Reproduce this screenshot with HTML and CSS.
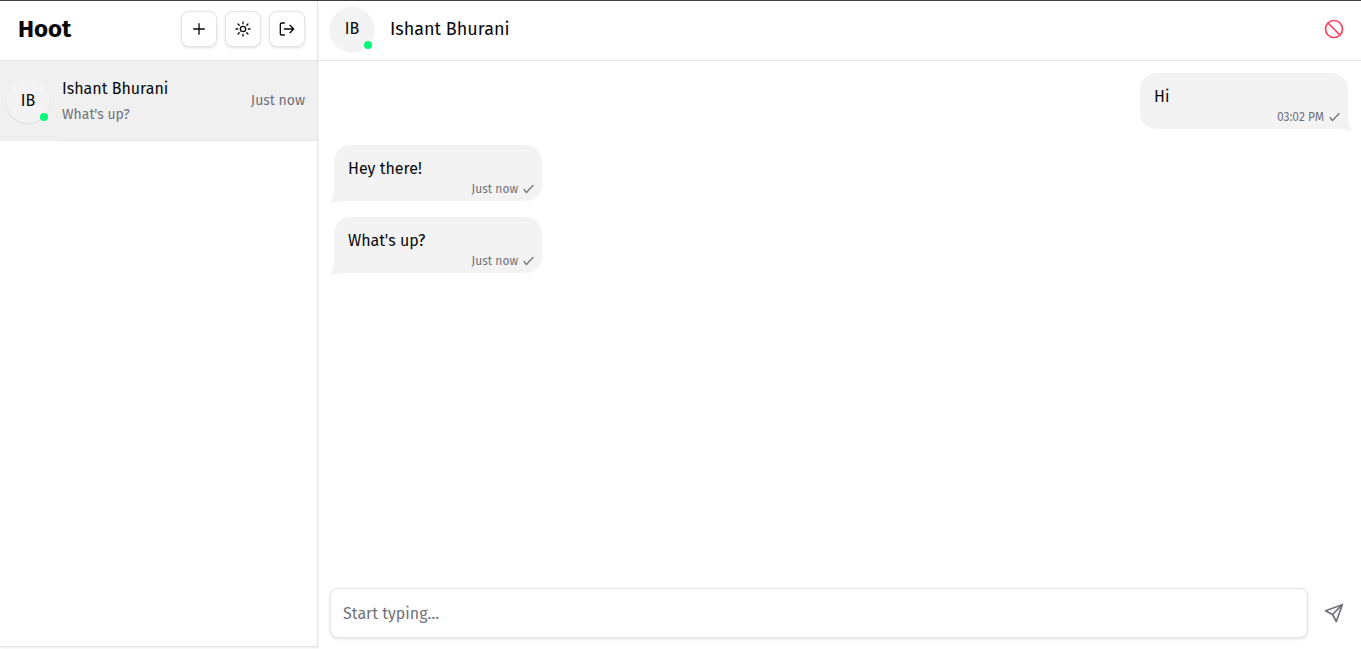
FILE: index.html
```html
<!DOCTYPE html>
<html lang="en">
<head>
<meta charset="utf-8">
<meta name="viewport" content="width=device-width, initial-scale=1">
<title>Hoot</title>
<link rel="stylesheet" href="styles.css">
</head>
<body>
<div class="app">
  <aside class="sidebar">
    <header class="bar sidebar-bar">
      <h1 class="brand">Hoot</h1>
      <div class="actions">
        <button class="icon-button" type="button" aria-label="New chat">
          <svg class="icon" width="16" height="16" viewBox="0 0 24 24"><path d="M4 12h16M12 4v16"/></svg>
        </button>
        <button class="icon-button" type="button" aria-label="Toggle theme">
          <svg class="icon" width="16" height="16" viewBox="0 0 24 24"><circle cx="12" cy="12" r="4"/><path d="M12 1.5v2.500M12 20v2.500M4.600 4.600l1.700 1.700M17.700 17.700l1.700 1.700M1.500 12h2.500M20 12h2.500M6.300 17.700l-1.700 1.700M19.400 4.600l-1.700 1.700"/></svg>
        </button>
        <button class="icon-button" type="button" aria-label="Log out">
          <svg class="icon" width="16" height="16" viewBox="0 0 24 24"><path d="M8 3H4a2 2 0 0 0-2 2v14a2 2 0 0 0 2 2h4M8 12h14M16.500 6.500L22 12l-5.500 5.500"/></svg>
        </button>
      </div>
    </header>
    <nav class="chats" aria-label="Chats">
      <a class="chat" href="#chat">
        <span class="avatar">IB<span class="online"></span></span>
        <span class="chat-body">
          <span class="chat-text">
            <span class="chat-name">Ishant Bhurani</span>
            <span class="chat-last">What's up?</span>
          </span>
          <span class="chat-time">Just now</span>
        </span>
      </a>
    </nav>
  </aside>
  <main class="conversation" id="chat">
    <header class="bar conversation-bar">
      <span class="avatar">IB<span class="online"></span></span>
      <h2 class="peer">Ishant Bhurani</h2>
      <button class="plain-button block" type="button" aria-label="Block user">
        <svg class="icon" width="20" height="20" viewBox="0 0 20 20"><circle cx="10" cy="10" r="8.500"/><path d="M4 4l12 12"/></svg>
      </button>
    </header>
    <section class="messages" aria-label="Messages">
      <article class="message sent">
        <p class="message-text">Hi</p>
        <p class="message-meta"><time>03:02 PM</time><svg class="icon" width="12" height="12" viewBox="0 0 12 12"><path d="M2 6.500l2.500 3 6.500-7"/></svg></p>
        <svg class="tail" width="12" height="12" viewBox="0 0 12 12"><path d="M7 0Q8 7 12 11.500Q6 10 0 9.500z"/></svg>
      </article>
      <article class="message received">
        <p class="message-text">Hey there!</p>
        <p class="message-meta"><time>Just now</time><svg class="icon" width="12" height="12" viewBox="0 0 12 12"><path d="M2 6.500l2.500 3 6.500-7"/></svg></p>
        <svg class="tail" width="12" height="12" viewBox="0 0 12 12"><path d="M5 0Q4 7 0 11.500Q6 10 12 9.500z"/></svg>
      </article>
      <article class="message received">
        <p class="message-text">What's up?</p>
        <p class="message-meta"><time>Just now</time><svg class="icon" width="12" height="12" viewBox="0 0 12 12"><path d="M2 6.500l2.500 3 6.500-7"/></svg></p>
        <svg class="tail" width="12" height="12" viewBox="0 0 12 12"><path d="M5 0Q4 7 0 11.500Q6 10 12 9.500z"/></svg>
      </article>
    </section>
    <form class="composer">
      <input class="composer-input" type="text" placeholder="Start typing..." aria-label="Message">
      <button class="plain-button send" type="submit" aria-label="Send">
        <svg class="icon" width="20" height="20" viewBox="0 0 20 20"><path d="M18.300 1.700L1.500 7.700l7 3.800 3.800 7z"/><path d="M18.300 1.700L8.500 11.500"/></svg>
      </button>
    </form>
  </main>
</div>
</body>
</html>
```

FILE: styles.css
```css
* {
  box-sizing: border-box;
}

body {
  margin: 0;
  background: #fff;
  color: #09090b;
  font-family: "Fira Sans", "Noto Sans", sans-serif;
  font-size: 16px;
  line-height: 24px;
}

h1, h2, p {
  margin: 0;
}

.app {
  display: flex;
  height: 100vh;
  border-top: 1px solid #3f4042;
}

.icon {
  display: block;
  fill: none;
  stroke: currentColor;
  stroke-width: 2;
  stroke-linecap: round;
  stroke-linejoin: round;
}

.bar {
  display: flex;
  align-items: center;
  flex: none;
  height: 60px;
  padding-bottom: 3px;
  border-bottom: 1px solid #e4e4e7;
}

.sidebar {
  display: flex;
  flex-direction: column;
  flex: 0 0 318px;
  margin-bottom: 2px;
  border: solid #e4e4e7;
  border-width: 0 1px 1px 0;
  box-shadow: 0 1px 2px rgb(0 0 0 / 8%);
}

.sidebar-bar {
  justify-content: space-between;
  padding-left: 18px;
  padding-right: 12px;
}

.brand {
  font-size: 24px;
  font-weight: 700;
  line-height: 32px;
}

.actions {
  display: flex;
  gap: 8px;
}

.icon-button {
  display: grid;
  place-items: center;
  width: 36px;
  height: 36px;
  padding: 0;
  border: 1px solid #e4e4e7;
  border-radius: 8px;
  background: #fff;
  color: #09090b;
  box-shadow: 0 1px 3px rgb(0 0 0 / 12%);
}

.chat {
  display: flex;
  align-items: center;
  gap: 8px;
  height: 80px;
  padding-left: 6px;
  background: #f0f0f0;
  color: inherit;
  text-decoration: none;
}

.avatar {
  position: relative;
  display: grid;
  place-items: center;
  flex: none;
  width: 44px;
  height: 44px;
  border-radius: 50%;
  background: #f3f3f3;
  box-shadow: 0 1px 2px rgb(0 0 0 / 8%);
}

.online {
  position: absolute;
  right: 2px;
  bottom: 2px;
  width: 8px;
  height: 8px;
  border-radius: 50%;
  background: #00fa78;
}

.chat-body {
  display: flex;
  flex: 1;
  align-items: center;
  justify-content: space-between;
  align-self: stretch;
  padding: 0 12px 0 4px;
  border-bottom: 1px solid #e4e4e7;
}

.chat-text {
  display: flex;
  flex-direction: column;
  gap: 2px;
  padding-top: 2px;
}

.chat-last,
.chat-time {
  color: #71717a;
  font-size: 14px;
}

.conversation {
  display: flex;
  flex-direction: column;
  flex: 1;
  min-width: 0;
}

.conversation-bar {
  gap: 16px;
  padding-left: 12px;
  padding-right: 12px;
}

.peer {
  flex: 1;
  font-size: 18px;
  font-weight: 400;
}

.plain-button {
  display: grid;
  place-items: center;
  width: 30px;
  height: 40px;
  padding: 0;
  border: 0;
  background: none;
}

.block {
  color: #ff4060;
}

.block .icon,
.send .icon {
  stroke-width: 1.7;
}

.messages {
  display: flex;
  flex: 1;
  flex-direction: column;
  gap: 16px;
  padding: 12px 13px 12px 16px;
}

.message {
  position: relative;
  min-width: 208px;
  max-width: 70%;
  padding: 12px 8px 4px 14px;
  border-radius: 16px;
  background: #f3f3f3;
}

.message-meta {
  display: flex;
  align-items: center;
  justify-content: flex-end;
  gap: 4px;
  color: #71717a;
  font-size: 12px;
  line-height: 16px;
}

.message-meta .icon {
  stroke-width: 1.2;
}

.sent {
  align-self: flex-end;
  border-bottom-right-radius: 0;
}

.received {
  align-self: flex-start;
  border-bottom-left-radius: 0;
}

.tail {
  position: absolute;
  bottom: -3px;
  fill: #f3f3f3;
}

.sent .tail {
  right: -5px;
}

.received .tail {
  left: -5px;
}

.composer {
  display: flex;
  align-items: center;
  gap: 11px;
  padding: 0 12px 11px;
}

.composer-input {
  flex: 1;
  min-width: 0;
  height: 50px;
  padding: 0 12px;
  border: 1px solid #e4e4e7;
  border-radius: 8px;
  background: #fff;
  color: inherit;
  font: inherit;
  box-shadow: 0 1px 3px rgb(0 0 0 / 12%);
}

.composer-input::placeholder {
  color: #71717a;
}

.send {
  color: #71717a;
}
```
